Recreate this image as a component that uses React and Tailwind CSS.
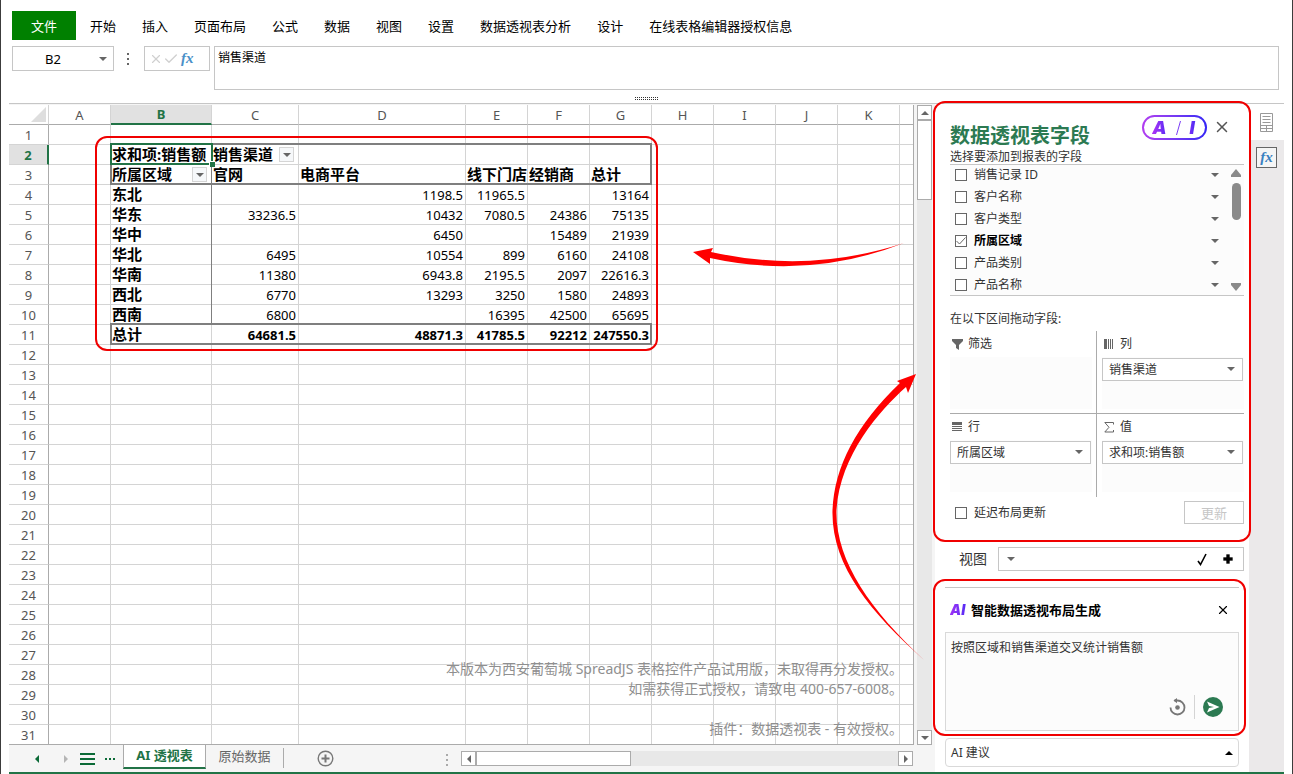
import React, { useState } from 'react';
import { Check, Plus, X } from 'lucide-react';

const columns = [
  { name: 'A', width: 'w-[62px]' },
  { name: 'B', width: 'w-[101px]' },
  { name: 'C', width: 'w-[87px]' },
  { name: 'D', width: 'w-[167px]' },
  { name: 'E', width: 'w-[62px]' },
  { name: 'F', width: 'w-[62px]' },
  { name: 'G', width: 'w-[62px]' },
  { name: 'H', width: 'w-[62px]' },
  { name: 'I', width: 'w-[62px]' },
  { name: 'J', width: 'w-[62px]' },
  { name: 'K', width: 'w-[62px]' },
  { name: '', width: '' }
];

// keyed by row number, values start at column B
const cells = {
  2: ['求和项:销售额', '销售渠道'],
  3: ['所属区域', '官网', '电商平台', '线下门店', '经销商', '总计'],
  4: ['东北', '', '1198.5', '11965.5', '', '13164'],
  5: ['华东', '33236.5', '10432', '7080.5', '24386', '75135'],
  6: ['华中', '', '6450', '', '15489', '21939'],
  7: ['华北', '6495', '10554', '899', '6160', '24108'],
  8: ['华南', '11380', '6943.8', '2195.5', '2097', '22616.3'],
  9: ['西北', '6770', '13293', '3250', '1580', '24893'],
  10: ['西南', '6800', '', '16395', '42500', '65695'],
  11: ['总计', '64681.5', '48871.3', '41785.5', '92212', '247550.3']
};

const rows = Array.from({ length: 31 }, (_, i) => i + 1);

const menus = ['开始', '插入', '页面布局', '公式', '数据', '视图', '设置', '数据透视表分析', '设计', '在线表格编辑器授权信息'];

const initialFields = [
  { name: '销售记录 ID', checked: false },
  { name: '客户名称', checked: false },
  { name: '客户类型', checked: false },
  { name: '所属区域', checked: true },
  { name: '产品类别', checked: false },
  { name: '产品名称', checked: false }
];

function Caret({ dir = 'down', className = '' }) {
  const points = {
    down: '0,0 8,0 4,4',
    up: '0,4 8,4 4,0',
    left: '4,0 4,8 0,4',
    right: '0,0 0,8 4,4'
  };
  const wide = dir === 'down' || dir === 'up';
  return (
    <svg width={wide ? 8 : 4} height={wide ? 4 : 8} className={`shrink-0 fill-current ${className}`} aria-hidden="true">
      <polygon points={points[dir]} />
    </svg>
  );
}

function Ribbon() {
  return (
    <nav className="flex h-[29px] items-stretch pl-[11px] text-[13px] text-black">
      <button className="mr-px w-16 bg-[#008000] pt-0.5 text-white">文件</button>
      {menus.map(menu => (
        <button key={menu} className="px-[13px] pt-0.5">{menu}</button>
      ))}
    </nav>
  );
}

function FormulaBar() {
  return (
    <div className="mt-1.5 flex items-start pl-[11px] pr-[13px]">
      <div className="flex h-[25px] w-[102px] items-center border border-[#c6c6c6] pr-1.5">
        <input aria-label="名称框" defaultValue="B2" className="w-20 min-w-0 flex-1 pt-0.5 pr-1.5 text-center text-[13px] outline-none" />
        <Caret className="text-[#666]" />
      </div>
      <div className="flex h-[25px] w-7 flex-col items-center justify-center gap-[3px]">
        <span className="size-[2px] bg-[#666]" />
        <span className="size-[2px] bg-[#666]" />
        <span className="size-[2px] bg-[#666]" />
      </div>
      <div className="mr-1 ml-0.5 flex h-[25px] w-[66px] items-center border border-[#c6c6c6] pl-1">
        <button aria-label="取消"><X className="size-3.5 text-[#d0d0d0]" strokeWidth={2} /></button>
        <button aria-label="确认" className="mr-0.5"><Check className="size-4 text-[#d0d0d0]" strokeWidth={2} /></button>
        <button className="font-['Liberation_Serif',serif] text-[15px] leading-none font-bold italic text-[#4a90c8]">fx</button>
      </div>
      <textarea
        aria-label="编辑栏"
        defaultValue="销售渠道"
        className="h-11 flex-1 resize-none border border-[#c6c6c6] px-[3px] py-[3px] text-xs leading-4 outline-none"
      />
    </div>
  );
}

function FilterButton() {
  return (
    <button aria-label="筛选" className="flex size-[15px] shrink-0 items-center justify-center border border-[#d5d5d5] bg-[#f6f8fa] text-[#666]">
      <Caret />
    </button>
  );
}

function Cell({ row, col }) {
  const value = cells[row]?.[col - 1] ?? '';
  const isText = row <= 3 || col === 1;
  const hasFilter = (row === 2 && col === 2) || (row === 3 && col === 1);
  const isLast = col === columns.length - 1;
  let style = 'px-0.5 pt-px pb-0 text-right text-[13px] leading-[18px]';
  if (isText) style = 'p-0 pl-px text-left text-[15px] font-bold leading-[19px]';
  else if (row === 11) style = 'px-0.5 pt-px pb-0 text-right text-[13px] leading-[18px] font-bold';

  return (
    <td className={`h-5 border-b border-[#d4d4d4] whitespace-nowrap ${isLast ? '' : 'border-r'} ${style}`}>
      {hasFilter ? (
        <div className={row === 3 ? 'flex h-[19px] items-center justify-between pr-1' : 'flex h-[19px] items-center gap-1.5'}>
          {value}
          <FilterButton />
        </div>
      ) : value}
    </td>
  );
}

function Sheet() {
  return (
    <div className="relative min-w-0 flex-1 overflow-hidden border-r border-b border-[#ababab] bg-white">
      <table className="w-full table-fixed border-separate border-spacing-0 text-black">
        <thead>
          <tr>
            <th className="h-5 w-10 border-r border-b border-r-[#d4d4d4] border-b-[#ababab] p-0">
              <svg width="15" height="15" className="ml-auto mr-0.5 fill-[#dedede]" aria-hidden="true">
                <polygon points="15,0 15,15 0,15" />
              </svg>
            </th>
            {columns.map(col => (
              <th
                key={col.name}
                className={`h-5 p-0 text-[13px] ${col.width} ${col.name ? 'border-r' : ''} ${
                  col.name === 'B'
                    ? 'border-b-2 border-r-[#d4d4d4] border-b-[#217346] bg-[#e1e1e1] pt-px leading-[17px] font-bold text-[#217346]'
                    : 'border-b border-r-[#d4d4d4] border-b-[#ababab] leading-[18px] font-normal text-[#555]'
                }`}
              >
                {col.name}
              </th>
            ))}
          </tr>
        </thead>
        <tbody>
          {rows.map(row => (
            <tr key={row}>
              <th
                className={`h-5 border-b border-b-[#d4d4d4] p-0 pt-px text-[13px] leading-[18px] ${
                  row === 2
                    ? 'border-r-2 border-r-[#217346] bg-[#e1e1e1] font-bold text-[#217346]'
                    : 'border-r border-r-[#ababab] font-normal text-[#555]'
                }`}
              >
                {row}
              </th>
              {columns.map((col, i) => <Cell key={i} row={row} col={i} />)}
            </tr>
          ))}
        </tbody>
      </table>

      {/* pivot outlines and the active cell */}
      <div className="pointer-events-none absolute top-[38px] left-[101px] h-[42px] w-[542px] border-2 border-[#7f7f7f]" />
      <div className="pointer-events-none absolute top-[218px] left-[101px] h-[22px] w-[542px] border-2 border-[#7f7f7f]" />
      <div className="pointer-events-none absolute top-[40px] left-[202px] h-[180px] w-px bg-[#7f7f7f]" />
      <div className="pointer-events-none absolute top-[38px] left-[101px] h-[22px] w-[103px] border-2 border-[#217346]">
        <span className="absolute -right-1 -bottom-1 size-1.5 border-t border-l border-white bg-[#217346]" />
      </div>
      <div className="pointer-events-none absolute top-[31px] left-[86px] h-[215px] w-[563px] rounded-xl border-2 border-[#f00000]" />

      <div className="pointer-events-none absolute right-2.5 bottom-[5px] text-right text-sm leading-5 text-[#8f8f8f]">
        <p>本版本为西安葡萄城 SpreadJS 表格控件产品试用版，未取得再分发授权。</p>
        <p>如需获得正式授权，请致电 400-657-6008。</p>
        <p className="mt-5">插件：数据透视表 - 有效授权。</p>
      </div>
    </div>
  );
}

function VerticalScrollbar() {
  return (
    <div className="mx-[3px] flex w-[15px] flex-col bg-[#e8e8e8] text-[#666]">
      <button aria-label="向上" className="flex h-[15px] items-center justify-center border border-[#ababab] bg-white"><Caret dir="up" /></button>
      <div className="h-20 border border-[#ababab] bg-white" />
      <button aria-label="向下" className="mt-auto flex h-[15px] items-center justify-center border border-[#ababab] bg-white"><Caret /></button>
    </div>
  );
}

function TabStrip() {
  return (
    <div className="flex h-[27px] items-start bg-[#f5f5f5] pr-[22px]">
      <div className="flex h-[27px] w-[114px] items-center pl-[26px] text-[#0b6a37]">
        <button aria-label="上一个"><Caret dir="left" /></button>
        <button aria-label="下一个" className="ml-[25px] text-[#b5b5b5]"><Caret dir="right" /></button>
        <button aria-label="所有工作表" className="ml-3 flex w-[15px] flex-col gap-[3px]">
          <span className="h-[2px] w-full bg-current" />
          <span className="h-[2px] w-full bg-current" />
          <span className="h-[2px] w-full bg-current" />
        </button>
        <span className="ml-2.5 flex gap-[2px]">
          <span className="size-[2px] bg-current" />
          <span className="size-[2px] bg-current" />
          <span className="size-[2px] bg-current" />
        </span>
      </div>
      <button className="-mt-px h-[25px] w-[83px] border-r border-b-2 border-l border-x-[#ababab] border-b-[#217346] bg-white text-[13px] font-bold text-[#217346]">AI 透视表</button>
      <button className="h-6 w-[77px] text-[13px] text-[#666]">原始数据</button>
      <span className="mt-[3px] h-5 w-px bg-[#ababab]" />
      <button aria-label="新建工作表" className="mt-[5px] ml-[33px] text-[#777]">
        <svg width="17" height="17" fill="none" stroke="currentColor" aria-hidden="true">
          <circle cx="8.5" cy="8.5" r="7.3" strokeWidth="1.4" />
          <path d="M8.5 4.5v8M4.5 8.5h8" strokeWidth="2" />
        </svg>
      </button>
      <div className="mt-[9px] ml-auto mr-[13px] flex flex-col gap-[3px]">
        <span className="size-[2px] bg-[#aaa]" />
        <span className="size-[2px] bg-[#aaa]" />
        <span className="size-[2px] bg-[#aaa]" />
      </div>
      <div className="mt-1.5 flex h-[15px] w-1/2 max-w-[452px] bg-[#e8e8e8] text-[#666]">
        <button aria-label="向左" className="flex w-[15px] items-center justify-center border border-[#ababab] bg-white"><Caret dir="left" /></button>
        <div className="w-[155px] border border-[#ababab] bg-white" />
        <button aria-label="向右" className="ml-auto flex w-[15px] items-center justify-center border border-[#ababab] bg-white"><Caret dir="right" /></button>
      </div>
    </div>
  );
}

function CheckBox({ id, checked, onChange }) {
  return (
    <span className="relative size-3 shrink-0">
      <input id={id} type="checkbox" checked={checked} onChange={onChange} className="block size-3 appearance-none border border-[#666] bg-white" />
      {checked && (
        <svg viewBox="0 0 12 12" className="pointer-events-none absolute inset-0 size-3 fill-none stroke-[#666]" aria-hidden="true">
          <path d="M1.500 6l3 3L10.500 2.500" />
        </svg>
      )}
    </span>
  );
}

function AreaBox({ icon, label, value, className }) {
  return (
    <div className={`flex h-[83px] flex-col ${className}`}>
      <div className="flex h-[26px] items-center gap-1 pl-0.5 text-xs text-[#333]">
        <span className="flex w-3 justify-start">{icon}</span>
        <label htmlFor={`area-${label}`}>{label}</label>
      </div>
      <div id={value ? undefined : `area-${label}`} className="h-[52px] bg-[#fcfcfc] pt-px">
        {value && (
          <div className="relative mr-px">
            <select id={`area-${label}`} className="block h-[23px] w-full appearance-none border border-[#c6c6c6] bg-white pl-1.5 text-xs text-[#333]">
              <option>{value}</option>
            </select>
            <Caret className="pointer-events-none absolute top-[9px] right-2 text-[#666]" />
          </div>
        )}
      </div>
    </div>
  );
}

const funnelIcon = (
  <svg width="11" height="11" className="fill-[#666]" aria-hidden="true"><path d="M0 0h11v2L7 6v5L4 9V6L0 2z" /></svg>
);
const columnsIcon = (
  <svg width="10" height="10" className="fill-[#666]" aria-hidden="true"><path d="M0 0h3v10H0zM4 0h1v10H4zM6 0h1v10H6zM8 0h1v10H8z" /></svg>
);
const rowsIcon = (
  <svg width="10" height="10" className="fill-[#666]" aria-hidden="true"><path d="M0 0h10v3H0zM0 4h10v1H0zM0 6h10v1H0zM0 8h10v1H0z" /></svg>
);
const sigmaIcon = (
  <svg width="10" height="11" fill="none" stroke="#666" aria-hidden="true"><path d="M9.500 2.500V.5H.8L5 5.300.8 10h8.700V8" /></svg>
);

function FieldPanel() {
  const [fields, setFields] = useState(initialFields);
  const [defer, setDefer] = useState(false);

  const toggle = (name) => {
    setFields(fields.map(f => (f.name === name ? { ...f, checked: !f.checked } : f)));
  };

  return (
    <section className="relative h-[437px] pt-2.5 pr-[5px] pl-[15px]">
      <div className="flex h-9 items-start">
        <h2 className="mt-1.5 text-xl leading-8 font-bold text-[#2c7a52]">数据透视表字段</h2>
        <button aria-label="AI" className="ml-auto mt-px h-[25px] w-[65px] rounded-full bg-linear-to-r from-[#b23cf0] to-[#3424f5] p-[2px]">
          <span className="flex h-full items-center justify-center gap-[7px] rounded-full bg-white font-[Inter,sans-serif] text-lg leading-none font-black italic">
            <span className="bg-linear-to-r from-[#b030f5] to-[#4a20f5] bg-clip-text pr-0.5 text-transparent">A</span>
            <svg width="5" height="14" className="stroke-[#7a3cf5]" aria-hidden="true"><path d="M4.500 0L.5 14" /></svg>
            <span className="bg-linear-to-r from-[#8a2cf5] to-[#3424f5] bg-clip-text px-0.5 text-transparent">I</span>
          </span>
        </button>
        <button aria-label="关闭" className="mt-1 mr-[13px] ml-1.5"><X className="size-[18px] text-[#555]" strokeWidth={2} /></button>
      </div>
      <p className="h-[14px] text-xs leading-[14px] text-[#333]">选择要添加到报表的字段</p>

      <div className="flex h-[132px] border-y border-[#c6c6c6] bg-[#fcfcfc]">
        <ul className="h-[130px] flex-1 overflow-hidden">
          {fields.map((field, i) => (
            <li key={field.name} className="flex h-[22px] items-center gap-[7px] pr-[9px] pb-0.5 pl-[5px]">
              <CheckBox id={`field-${i}`} checked={field.checked} onChange={() => toggle(field.name)} />
              <label htmlFor={`field-${i}`} className={field.checked ? 'text-xs font-bold text-black' : 'text-xs text-[#333]'}>{field.name}</label>
              <button aria-label="字段选项" className="ml-auto text-[#666]"><Caret /></button>
            </li>
          ))}
        </ul>
        <div className="flex w-4 flex-col items-center justify-between py-1 text-[#8a8a8a]">
          <svg width="10" height="8" className="fill-current" aria-hidden="true"><path d="M5 0l5 6v2H0V6z" /></svg>
          <div className="mt-1.5 mb-auto h-[37px] w-[9px] rounded-full bg-[#8a8a8a]" />
          <svg width="10" height="8" className="fill-current" aria-hidden="true"><path d="M5 8l5-6V0H0v2z" /></svg>
        </div>
      </div>

      <p className="mt-3.5 h-[21px] text-xs leading-[18px] text-[#333]">在以下区间拖动字段:</p>
      <div className="grid grid-cols-2">
        <AreaBox icon={funnelIcon} label="筛选" className="border-r border-b border-[#ababab] pr-1" />
        <AreaBox icon={columnsIcon} label="列" value="销售渠道" className="border-b border-[#ababab] pl-[5px]" />
        <AreaBox icon={rowsIcon} label="行" value="所属区域" className="border-r border-[#ababab] pr-1" />
        <AreaBox icon={sigmaIcon} label="值" value="求和项:销售额" className="pl-[5px]" />
      </div>

      <div className="mt-1 flex items-center pl-[5px]">
        <CheckBox id="defer" checked={defer} onChange={() => setDefer(!defer)} />
        <label htmlFor="defer" className="ml-[7px] text-xs text-[#333]">延迟布局更新</label>
        <button disabled className="ml-auto h-[23px] w-[60px] border border-[#c6c6c6] text-[13px] leading-5 text-[#c6c6c6]">更新</button>
      </div>
      <div className="pointer-events-none absolute -top-[3px] -right-0.5 -left-0.5 h-[441px] rounded-xl border-2 border-[#f00000]" />
    </section>
  );
}

function ViewBar() {
  return (
    <div className="mt-1.5 flex h-6 items-center pr-[5px] pl-6 text-sm">
      <label htmlFor="view-name" className="text-[#333]">视图</label>
      <div className="ml-auto flex h-6 w-[246px] items-center border border-[#c6c6c6] pr-[7px] pl-2">
        <Caret className="text-[#666]" />
        <input id="view-name" className="h-5 w-20 min-w-0 flex-1 bg-white outline-none" />
        <button aria-label="应用" className="mr-3">
          <svg width="12" height="13" fill="none" stroke="#000" aria-hidden="true"><path d="M2 8l2.500 3.500L10 1" strokeWidth="1.600" /></svg>
        </button>
        <button aria-label="添加"><Plus className="size-4" strokeWidth={5} strokeLinecap="butt" /></button>
      </div>
    </div>
  );
}

function AiPrompt() {
  return (
    <section className="relative mt-4 ml-2.5 mr-2.5">
      <div className="flex h-[45px] items-center border-t border-[#c6c6c6] pl-[5px]">
        <span className="w-[21px] bg-linear-to-r from-[#a030f5] to-[#3a20f5] bg-clip-text font-[Inter,sans-serif] text-sm leading-4 font-black italic text-transparent">AI</span>
        <h3 className="pt-0.5 text-[13px] font-bold text-black">智能数据透视布局生成</h3>
        <button aria-label="关闭" className="mr-[9px] ml-auto"><X className="size-3.5" strokeWidth={2} /></button>
      </div>
      <div className="relative">
        <textarea
          aria-label="提示词"
          defaultValue="按照区域和销售渠道交叉统计销售额"
          className="block h-[99px] w-full resize-none border border-[#d9d9d9] bg-[#fcfcfc] px-[5px] py-1.5 text-xs leading-[18px] text-[#333] outline-none"
        />
        <div className="absolute right-4 bottom-3 flex items-center">
          <button aria-label="重置">
            <svg width="17" height="18" fill="none" stroke="#777" aria-hidden="true">
              <path d="M1.500 9.500a7 7 0 1 0 7-7H5.500" strokeWidth="1.800" />
              <path d="M8 0L4.500 2.600 8 5.200z" fill="#777" stroke="none" />
              <circle cx="8.500" cy="9.500" r="2.300" fill="#777" stroke="none" />
            </svg>
          </button>
          <span className="mx-2 h-6 w-px bg-[#d4d4d4]" />
          <button aria-label="发送">
            <svg width="20" height="20" aria-hidden="true">
              <circle cx="10" cy="10" r="10" fill="#2c7a52" />
              <path d="M4 4.500L16.500 10 4 15.500 6 10.900 11 10 6 9.100z" fill="#fff" />
            </svg>
          </button>
        </div>
      </div>
      <div className="pointer-events-none absolute -top-2 -right-[7px] -left-3 h-[157px] rounded-xl border-2 border-[#f00000]" />
    </section>
  );
}

function Arrows() {
  return (
    <svg width="260" height="430" className="pointer-events-none absolute top-[230px] right-[352px] fill-[#ff0000]" aria-hidden="true">
      <path d="M13 22L33 18 31 22Q130 44 224 13Q130 50 30 28L30 34z" />
      <path d="M236 144L217 151 220 153Q155 215 152.500 280C151 335 190 382 244 430C190 380 155 330 156.500 280C160 225 200 180 226 157L228 163z" />
    </svg>
  );
}

export default function App() {
  return (
    <div className="relative flex h-screen flex-col overflow-hidden border-x border-[#3c3c3c] bg-white pt-[11px] font-['Noto_Sans','Noto_Sans_CJK_SC',sans-serif]">
      <Ribbon />
      <FormulaBar />
      <div className="flex h-[13px] items-end justify-center pb-0.5">
        <svg width="24" height="4" stroke="#333" strokeDasharray="1 1" aria-hidden="true">
          <path d="M0 .5h24M0 2.500h24" />
        </svg>
      </div>
      <main className="mx-2 flex min-h-0 flex-1 border-t border-b-2 border-t-[#c6c6c6] border-b-[#217346]">
        <div className="flex min-w-0 flex-1 flex-col bg-[#f5f5f5] pt-px">
          <div className="flex min-h-0 flex-1">
            <Sheet />
            <VerticalScrollbar />
          </div>
          <TabStrip />
        </div>
        <aside className="w-[314px] shrink-0">
          <FieldPanel />
          <ViewBar />
          <AiPrompt />
          <button className="mx-2.5 mt-[7px] flex h-[29px] w-[294px] items-center justify-between rounded border border-[#d9d9d9] pr-[5px] pl-[5px] text-xs text-[#333]">
            AI 建议
            <Caret dir="up" className="text-black" />
          </button>
        </aside>
        <div className="flex w-[35px] shrink-0 flex-col bg-[#ebe9ea]">
          <button aria-label="属性" className="flex h-9 w-full items-center justify-center bg-white">
            <svg width="13" height="19" fill="none" stroke="#999" aria-hidden="true">
              <path d="M.5.5h12v18H.5zM2.500 3.500h8M2.500 6.500h8M2.500 9.500h8M.5 12.500h12M.5 15.500h12M6.500 12.500v6" />
            </svg>
          </button>
          <button className="mx-auto mt-[7px] h-[21px] w-[21px] border border-[#666] bg-[#f5f5f5] font-['Liberation_Serif',serif] text-[15px] leading-none font-bold italic text-[#3a80c0]">fx</button>
        </div>
      </main>
      <Arrows />
    </div>
  );
}
